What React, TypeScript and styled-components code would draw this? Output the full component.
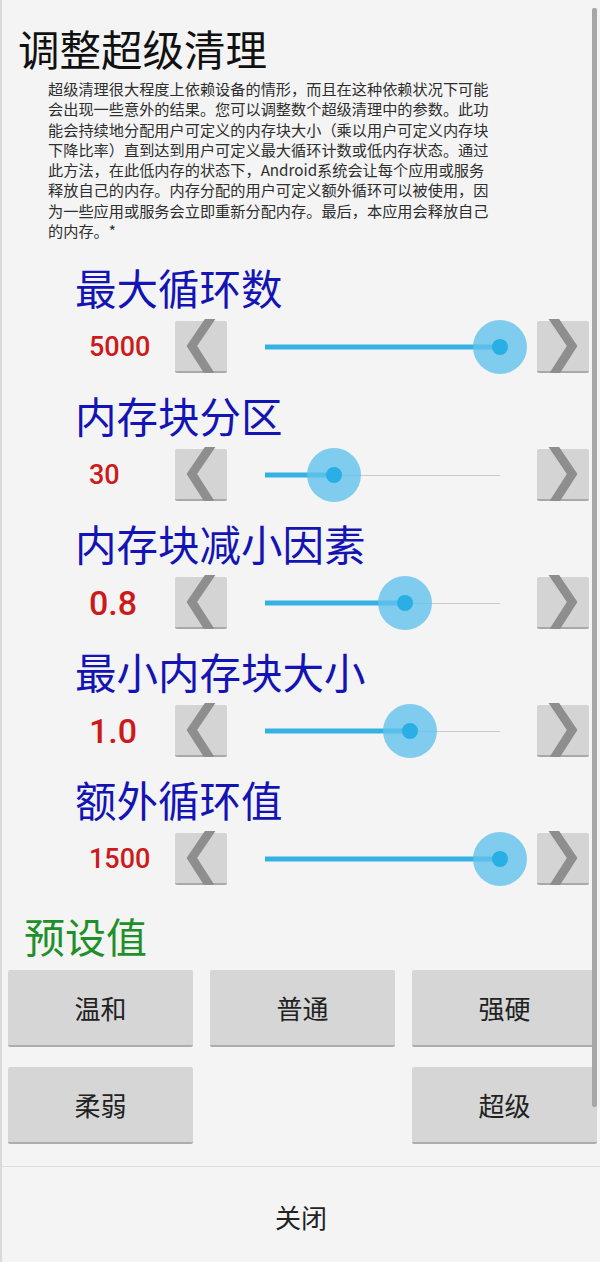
import React from "react";
import styled, { createGlobalStyle } from "styled-components";

const GlobalStyle = createGlobalStyle`
  html, body {
    margin: 0;
    padding: 0;
    background: #f4f4f4;
  }
  body {
    font-family: "Noto Sans CJK SC", "Noto Sans", sans-serif;
  }
`;

const Dialog = styled.div`
  width: 600px;
  height: 1262px;
  display: flex;
  flex-direction: column;
  box-sizing: border-box;
  border-left: 2px solid #d9d9d9;
  background: #f4f4f4;
  overflow: hidden;
`;

const Scroll = styled.div`
  position: relative;
  height: 1166px;
  flex: none;
`;

const ScrollThumb = styled.div`
  position: absolute;
  top: 8px;
  right: 3px;
  width: 5px;
  height: 1099px;
  border-radius: 2px;
  background: #a6a6a6;
`;

const Title = styled.h1`
  margin: 24px 0 0 16px;
  font-size: 41.5px;
  line-height: 48px;
  font-weight: 400;
  color: #111;
`;

const Desc = styled.p`
  margin: 6px 0 0 46px;
  font-size: 15.2px;
  line-height: 20.3px;
  color: #2e2e2e;
  white-space: nowrap;
`;

const Groups = styled.div`
  margin-top: 23px;
  display: flex;
  flex-direction: column;
  gap: 16px;
`;

const Group = styled.div`
  display: flex;
  flex-direction: column;
  gap: 8px;
`;

const Label = styled.div`
  padding-left: 73px;
  font-size: 41.5px;
  line-height: 48px;
  color: #1414b4;
`;

const Row = styled.div`
  display: flex;
  align-items: center;
  height: 56px;
  padding-left: 87px;
`;

const Value = styled.div<{ $big?: boolean }>`
  width: 86px;
  font-family: Roboto, "Liberation Sans", sans-serif;
  font-weight: 500;
  font-size: ${(p) => (p.$big ? "34px" : "27px")};
  color: #cc1a1a;
`;

const ArrowButton = styled.div`
  width: 52px;
  height: 50px;
  flex: none;
  background: #d4d4d4;
  border-bottom: 2px solid #a9a9a9;
  border-radius: 2px;
  display: flex;
  align-items: center;
  justify-content: center;
  svg {
    overflow: visible;
    display: block;
  }
`;

const SliderBox = styled.div`
  width: 310px;
  height: 56px;
  box-sizing: border-box;
  padding: 0 37px 0 38px;
  display: flex;
  align-items: center;
`;

const Track = styled.div`
  position: relative;
  flex: 1;
  height: 1.5px;
  background: #cacaca;
`;

const Fill = styled.div`
  position: absolute;
  left: 0;
  top: 50%;
  height: 5px;
  transform: translateY(-50%);
  background: #35b2e3;
`;

const Thumb = styled.div`
  position: absolute;
  top: 50%;
  width: 54px;
  height: 54px;
  border-radius: 50%;
  transform: translate(-50%, -50%);
  background: rgba(98, 194, 236, 0.8);
  display: flex;
  align-items: center;
  justify-content: center;
  &::after {
    content: "";
    width: 16px;
    height: 16px;
    border-radius: 50%;
    background: #2aaee6;
  }
`;

const PresetTitle = styled.div`
  margin: 24px 0 0 22px;
  font-size: 41px;
  line-height: 48px;
  color: #1f8f2a;
`;

const PresetGrid = styled.div`
  margin-top: 11px;
  padding: 0 0 0 6px;
  display: grid;
  grid-template-columns: repeat(3, 185px);
  column-gap: 17px;
  row-gap: 20px;
`;

const PresetButton = styled.div`
  height: 75px;
  background: #d6d6d6;
  border-bottom: 2px solid #adadad;
  border-radius: 2px;
  display: flex;
  align-items: center;
  justify-content: center;
  font-size: 26px;
  color: #222;
`;

const Footer = styled.div`
  flex: 1;
  border-top: 1px solid #dcdcdc;
  display: flex;
  align-items: center;
  justify-content: center;
  padding-top: 4px;
  font-size: 26px;
  color: #222;
`;

const Chevron = ({ dir }: { dir: "left" | "right" }) => {
  const pts =
    dir === "left"
      ? "30,-2 41,-2 22,26 40,54 29,54 11,26"
      : "22,-2 11,-2 30,26 12,54 23,54 41,26";
  return (
    <svg width="52" height="50" viewBox="0 0 52 52">
      <polygon points={pts} fill="#8e8e8e" />
    </svg>
  );
};

const Slider = ({ pct }: { pct: number }) => (
  <SliderBox>
    <Track>
      <Fill style={{ width: `${pct}%` }} />
      <Thumb style={{ left: `${pct}%` }} />
    </Track>
  </SliderBox>
);

const lines = [
  "超级清理很大程度上依赖设备的情形，而且在这种依赖状况下可能",
  "会出现一些意外的结果。您可以调整数个超级清理中的参数。此功",
  "能会持续地分配用户可定义的内存块大小（乘以用户可定义内存块",
  "下降比率）直到达到用户可定义最大循环计数或低内存状态。通过",
  "此方法，在此低内存的状态下，Android系统会让每个应用或服务",
  "释放自己的内存。内存分配的用户可定义额外循环可以被使用，因",
  "为一些应用或服务会立即重新分配内存。最后，本应用会释放自己",
  "的内存。*",
];

const params = [
  { label: "最大循环数", value: "5000", pct: 100 },
  { label: "内存块分区", value: "30", pct: 29.4 },
  { label: "内存块减小因素", value: "0.8", pct: 59.6, big: true },
  { label: "最小内存块大小", value: "1.0", pct: 61.7, big: true },
  { label: "额外循环值", value: "1500", pct: 100 },
];

export default function App() {
  return (
    <>
      <GlobalStyle />
      <Dialog>
        <Scroll>
          <Title>调整超级清理</Title>
          <Desc>
            {lines.map((l, i) => (
              <React.Fragment key={i}>
                {l}
                {i < lines.length - 1 && <br />}
              </React.Fragment>
            ))}
          </Desc>
          <Groups>
            {params.map((p) => (
              <Group key={p.label}>
                <Label>{p.label}</Label>
                <Row>
                  <Value $big={p.big}>{p.value}</Value>
                  <ArrowButton>
                    <Chevron dir="left" />
                  </ArrowButton>
                  <Slider pct={p.pct} />
                  <ArrowButton>
                    <Chevron dir="right" />
                  </ArrowButton>
                </Row>
              </Group>
            ))}
          </Groups>
          <PresetTitle>预设值</PresetTitle>
          <PresetGrid>
            <PresetButton>温和</PresetButton>
            <PresetButton>普通</PresetButton>
            <PresetButton>强硬</PresetButton>
            <PresetButton>柔弱</PresetButton>
            <div />
            <PresetButton>超级</PresetButton>
          </PresetGrid>
          <ScrollThumb />
        </Scroll>
        <Footer>关闭</Footer>
      </Dialog>
    </>
  );
}
